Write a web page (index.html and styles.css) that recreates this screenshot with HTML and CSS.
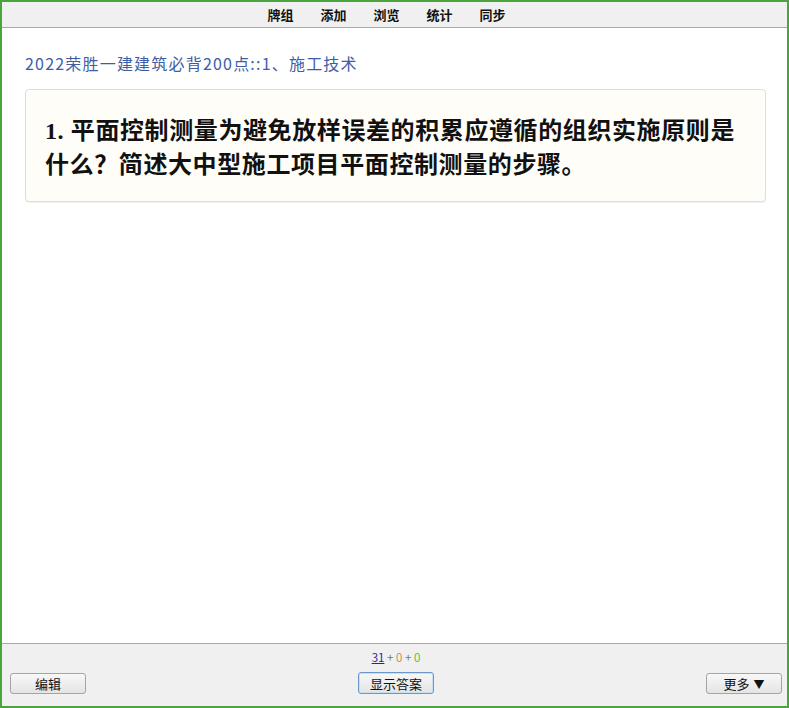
FILE: index.html
```html
<!DOCTYPE html>
<html lang="zh">
<head>
<meta charset="utf-8">
<title>Anki</title>
<link rel="stylesheet" href="styles.css">
</head>
<body>
<div class="window">
  <nav class="topbar">
    <a class="menu-item">牌组</a>
    <a class="menu-item">添加</a>
    <a class="menu-item">浏览</a>
    <a class="menu-item">统计</a>
    <a class="menu-item">同步</a>
  </nav>
  <main class="main">
    <div class="crumb">2022荣胜一建建筑必背200点::1、施工技术</div>
    <div class="card">
      <p class="question">1. 平面控制测量为避免放样误差的积累应遵循的组织实施原则是什么？简述大中型施工项目平面控制测量的步骤。</p>
    </div>
  </main>
  <footer class="bottombar">
    <div class="cell cell-left">
      <button class="btn">编辑</button>
    </div>
    <div class="cell cell-mid">
      <div class="stats"><span class="new">31</span> + <span class="learn">0</span> + <span class="review">0</span></div>
      <button class="btn btn-primary">显示答案</button>
    </div>
    <div class="cell cell-right">
      <button class="btn">更多<span class="caret">▼</span></button>
    </div>
  </footer>
</div>
</body>
</html>
```

FILE: styles.css
```css
html, body {
  margin: 0;
  padding: 0;
}

body {
  font-family: "Noto Sans CJK SC", "DejaVu Sans", sans-serif;
  background: #ffffff;
}

.window {
  box-sizing: border-box;
  width: 789px;
  height: 708px;
  border: 2px solid #4ca43e;
  display: flex;
  flex-direction: column;
  background: #ffffff;
}

.topbar {
  height: 25px;
  flex: none;
  background: #f0f0f0;
  border-bottom: 1px solid #a8a8a8;
  display: flex;
  justify-content: center;
  align-items: center;
  gap: 27px;
  padding-right: 16px;
}

.menu-item {
  font-size: 13px;
  font-weight: bold;
  color: #111111;
  width: 26px;
  text-align: center;
  white-space: nowrap;
  line-height: 16px;
}

.main {
  flex: 1;
  padding: 24px 21px 0 23px;
  background: #ffffff;
}

.crumb {
  font-size: 16px;
  line-height: 22px;
  color: #3d5ea6;
  font-weight: 400;
  letter-spacing: 1.2px;
}

.card {
  margin-top: 15px;
  background: #fffdf8;
  border: 1px solid #dedede;
  border-radius: 4px;
  box-shadow: 0 1px 1px rgba(0, 0, 0, 0.06);
  padding: 24px 20px 19px 19px;
}

.question {
  margin: 0;
  font-family: "Liberation Serif", "Noto Sans CJK SC", serif;
  font-weight: bold;
  font-size: 24px;
  line-height: 34px;
  letter-spacing: 0.6px;
  color: #111111;
}

.bottombar {
  flex: none;
  height: 63px;
  box-sizing: border-box;
  background: #f0f0f0;
  border-top: 1px solid #a8a8a8;
  display: grid;
  grid-template-columns: 1fr auto 1fr;
  align-items: end;
  padding: 0 5px 12px 8px;
}

.cell-left {
  justify-self: start;
}

.cell-right {
  justify-self: end;
}

.cell-mid {
  display: flex;
  flex-direction: column;
  align-items: center;
  gap: 7px;
}

.stats {
  font-size: 11.5px;
  line-height: 15px;
  color: #777777;
}

.new {
  color: #1f2a9a;
  text-decoration: underline;
}

.learn {
  color: #d28a55;
}

.review {
  color: #66bb44;
}

.btn {
  box-sizing: border-box;
  width: 76px;
  height: 21px;
  padding: 0;
  font-family: "Noto Sans CJK SC", "DejaVu Sans", sans-serif;
  font-size: 13px;
  line-height: 19px;
  color: #111111;
  border: 1px solid #a4a4a4;
  border-radius: 3px;
  background: linear-gradient(#f8f8f8, #e4e4e4);
}

.caret {
  font-size: 11px;
  margin-left: 4px;
}

.btn-primary {
  height: 22px;
  font-size: 13px;
  border-color: #6b98c9;
  box-shadow: inset 0 0 0 1px #c8def3;
}
```
